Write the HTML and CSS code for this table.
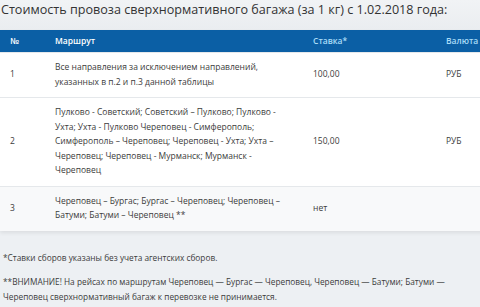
FILE: index.html
```html
<!DOCTYPE html>
<html lang="ru">
    <head>
        <meta charset="UTF-8">
        <meta name="viewport" content="width=device-width, initial-scale=1.0">
        <title>Сверхнормативный багаж</title>
        <link rel="stylesheet" href="styles.css">
    </head>
    <body>
        <div class="page">
            <h3 class="page-title">Стоимость провоза сверхнормативного багажа (за 1 кг) с 1.02.2018 года:</h3>

            <!-- Baggage rates -->
            <table class="rates">
                <thead>
                    <tr>
                        <th class="col-num">№</th>
                        <th class="col-route">Маршрут</th>
                        <th class="col-rate light">Ставка*</th>
                        <th class="col-cur light">Валюта</th>
                    </tr>
                </thead>
                <tbody>
                    <tr>
                        <td>1</td>
                        <td>Все направления за исключением направлений, указанных в п.2 и п.3 данной таблицы</td>
                        <td>100,00</td>
                        <td>РУБ</td>
                    </tr>
                    <tr>
                        <td>2</td>
                        <td>Пулково - Советский; Советский – Пулково; Пулково - Ухта; Ухта - Пулково Череповец - Симферополь; Симферополь – Череповец; Череповец - Ухта; Ухта – Череповец; Череповец - Мурманск; Мурманск - Череповец</td>
                        <td>150,00</td>
                        <td>РУБ</td>
                    </tr>
                    <tr class="alt">
                        <td>3</td>
                        <td>Череповец – Бургас; Бургас – Череповец; Череповец – Батуми; Батуми – Череповец **</td>
                        <td>нет</td>
                        <td></td>
                    </tr>
                </tbody>
            </table>

            <div class="notes">
                <p>*Ставки сборов указаны без учета агентских сборов.</p>
                <p>**ВНИМАНИЕ! На рейсах по маршрутам Череповец — Бургас — Череповец, Череповец — Батуми; Батуми — Череповец сверхнормативный багаж к перевозке не принимается.</p>
            </div>
        </div>
    </body>
</html>
```

FILE: styles.css
```css
html, body {
    margin: 0;
    padding: 0;
    overflow: hidden;
}
body {
    font-family: "Open Sans", Arial, sans-serif;
    background-color: #edf0f3;
    color: #3c3c3c;
}
.page {
    width: 520px;
}
.page-title {
    margin: 0;
    padding: 1px 0 0 1px;
    height: 29px;
    font-size: 12.6px;
    font-weight: normal;
    line-height: 18px;
    color: #333;
    white-space: nowrap;
    background: linear-gradient(#f1f3f5, #eaedf0);
}
.rates {
    width: 520px;
    border-collapse: collapse;
    table-layout: fixed;
    font-size: 8.5px;
    line-height: 14.5px;
    background-color: #fff;
    box-shadow: 0 2px 4px rgba(0, 0, 0, 0.08);
}
.rates th {
    height: 22px;
    padding: 0 10px;
    text-align: left;
    font-weight: 600;
    color: #fff;
    background-color: #0b5fa5;
}
.rates th.light {
    color: #a9dcf7;
}
.rates td {
    padding: 7px 10px 8px;
    vertical-align: middle;
    border-top: 1px solid #e5e8eb;
}
.rates tr.alt td {
    background-color: #f8f9fa;
}
.col-num {
    width: 25px;
}
.col-route {
    width: 238px;
}
.col-rate {
    width: 113px;
}
.notes {
    width: 462px;
    padding: 19px 3px 0;
    font-size: 8.3px;
    line-height: 15px;
    color: #3c3c3c;
}
.notes p {
    margin: 0 0 9px;
}
```
